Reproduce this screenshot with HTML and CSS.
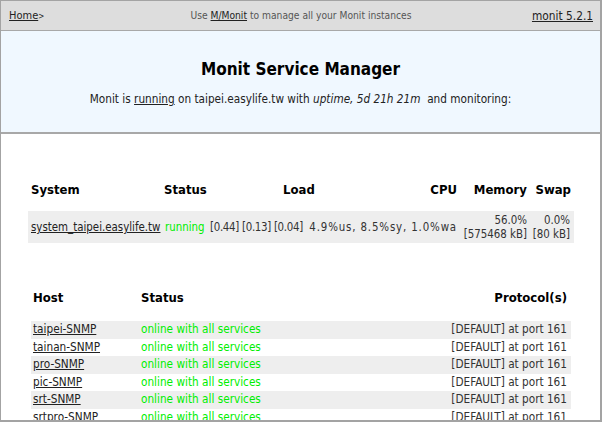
FILE: index.html
```html
<!DOCTYPE html>
<html>
<head>
<meta charset="utf-8">
<title>Monit: taipei.easylife.tw</title>
<link rel="stylesheet" href="styles.css">
</head>
<body>
<div class="frame">
  <div class="nav">
    <div class="nav-left"><a href="#">Home</a><span class="gt">&gt;</span></div>
    <div class="nav-center">Use <a href="#">M/Monit</a> to manage all your Monit instances</div>
    <div class="nav-right"><a href="#">monit 5.2.1</a></div>
  </div>
  <div class="header">
    <h1 class="title">Monit Service Manager</h1>
    <p class="subtitle">Monit is <a href="#">running</a> on taipei.easylife.tw with <i>uptime, 5d 21h 21m</i>&nbsp; and monitoring:</p>
  </div>
  <div class="content">
    <table class="sys">
      <colgroup>
        <col class="c-sys"><col class="c-status"><col class="c-load"><col class="c-cpu"><col class="c-mem"><col class="c-swap">
      </colgroup>
      <thead>
        <tr>
          <th class="th-left">System</th>
          <th class="th-status">Status</th>
          <th class="th-load">Load</th>
          <th class="th-right">CPU</th>
          <th class="th-right">Memory</th>
          <th class="th-right">Swap</th>
        </tr>
      </thead>
      <tbody>
        <tr class="sys-row">
          <td class="td-sys"><a href="#">system_taipei.easylife.tw</a></td>
          <td class="td-status ok">running</td>
          <td class="td-load">[0.44]&nbsp;[0.13]&nbsp;[0.04]</td>
          <td class="td-right td-cpu">4.9%us,&nbsp;8.5%sy,&nbsp;1.0%wa</td>
          <td class="td-right">56.0%<br>[575468&nbsp;kB]</td>
          <td class="td-right td-swap">0.0%<br>[80&nbsp;kB]</td>
        </tr>
      </tbody>
    </table>

    <table class="hosts">
      <colgroup>
        <col class="h-host"><col class="h-status"><col class="h-proto">
      </colgroup>
      <thead>
        <tr>
          <th class="th-host">Host</th>
          <th class="th-hstatus">Status</th>
          <th class="th-proto">Protocol(s)</th>
        </tr>
      </thead>
      <tbody>
        <tr class="odd"><td class="td-host"><a href="#">taipei-SNMP</a></td><td class="td-hstatus ok">online with all services</td><td class="td-proto">[DEFAULT] at port 161</td></tr>
        <tr><td class="td-host"><a href="#">tainan-SNMP</a></td><td class="td-hstatus ok">online with all services</td><td class="td-proto">[DEFAULT] at port 161</td></tr>
        <tr class="odd"><td class="td-host"><a href="#">pro-SNMP</a></td><td class="td-hstatus ok">online with all services</td><td class="td-proto">[DEFAULT] at port 161</td></tr>
        <tr><td class="td-host"><a href="#">pic-SNMP</a></td><td class="td-hstatus ok">online with all services</td><td class="td-proto">[DEFAULT] at port 161</td></tr>
        <tr class="odd"><td class="td-host"><a href="#">srt-SNMP</a></td><td class="td-hstatus ok">online with all services</td><td class="td-proto">[DEFAULT] at port 161</td></tr>
        <tr><td class="td-host"><a href="#">srtpro-SNMP</a></td><td class="td-hstatus ok">online with all services</td><td class="td-proto">[DEFAULT] at port 161</td></tr>
      </tbody>
    </table>
  </div>
</div>
</body>
</html>
```

FILE: styles.css
```css
html, body {
  margin: 0;
  padding: 0;
  background: #ffffff;
}

body {
  font-family: "DejaVu Sans Condensed", "DejaVu Sans", sans-serif;
  font-size: 11px;
  color: #222222;
}

a {
  color: #222222;
  text-decoration: underline;
}

.frame {
  box-sizing: border-box;
  width: 602px;
  height: 422px;
  overflow: hidden;
  border-style: solid;
  border-color: #a3a3a3;
  border-width: 1px 2px 2px 1px;
  background: #ffffff;
}

/* top navigation bar */
.nav {
  display: grid;
  grid-template-columns: 1fr auto 1fr;
  align-items: center;
  height: 29px;
  background: #dddddd;
  border-bottom: 1px solid #a8a8a8;
  padding: 0 7px 0 8px;
}

.nav-left {
  font-size: 11px;
  justify-self: start;
}

.gt {
  font-size: 8px;
}

.nav-center {
  font-size: 10.2px;
  color: #555555;
}

.nav-right {
  font-size: 11.8px;
  justify-self: end;
}

/* header panel */
.header {
  box-sizing: border-box;
  height: 103px;
  background: #f0f8ff;
  border-bottom: 2px solid #a8a8a8;
  text-align: center;
  padding-top: 28px;
}

.title {
  margin: 0;
  font-size: 17px;
  line-height: 20px;
  font-weight: bold;
  color: #000000;
}

.subtitle {
  margin: 13px 0 0;
  font-size: 11.7px;
  line-height: 14px;
  color: #222222;
}

/* content */
.content {
  display: flex;
  flex-direction: column;
}

table {
  border-collapse: collapse;
  border-spacing: 0;
  table-layout: fixed;
}

th {
  font-size: 13px;
  font-weight: bold;
  line-height: 16px;
  color: #000000;
  padding: 0 0 13px;
  white-space: nowrap;
}

td {
  padding: 0;
  white-space: nowrap;
  color: #333333;
}

/* system table */
.sys {
  margin: 48px 0 0 27px;
  width: 546px;
}

.c-sys { width: 134px; }
.c-status { width: 46px; }
.c-load { width: 100px; }
.c-cpu { width: 152px; }
.c-mem { width: 70px; }
.c-swap { width: 44px; }

.th-left { text-align: left; padding-left: 3px; }
.th-status { text-align: left; padding-left: 2px; }
.th-load { text-align: left; padding-left: 75px; }
.th-right { text-align: right; padding-right: 3px; }

.sys-row {
  background: #eeeeee;
}

.sys-row td {
  height: 32px;
  font-size: 11.4px;
  line-height: 14px;
  vertical-align: middle;
}

.td-sys { padding-left: 3px; }
.td-status { padding-left: 3px; }
.td-load { padding-left: 2px; letter-spacing: -0.3px; }
.td-right { text-align: right; padding-right: 3px; }
.td-cpu { letter-spacing: 0.85px; }
.td-swap { padding-right: 4px; }

.ok {
  color: #00ee00;
}

/* hosts table */
.hosts {
  margin: 47px 0 0 30px;
  width: 540px;
}

.h-host { width: 108px; }
.h-status { width: 261px; }
.h-proto { width: 171px; }

.th-host { text-align: left; padding-left: 2px; padding-bottom: 15px; }
.th-hstatus { text-align: left; padding-left: 2px; padding-bottom: 15px; }
.th-proto { text-align: right; padding-right: 4px; padding-bottom: 15px; }

.hosts td {
  height: 17.6px;
  line-height: 17.6px;
  font-size: 11.7px;
}

.hosts tr.odd {
  background: #eeeeee;
}

.td-host { padding-left: 2px; }
.td-hstatus { padding-left: 2px; }
.td-proto { text-align: right; padding-right: 4px; }
```
